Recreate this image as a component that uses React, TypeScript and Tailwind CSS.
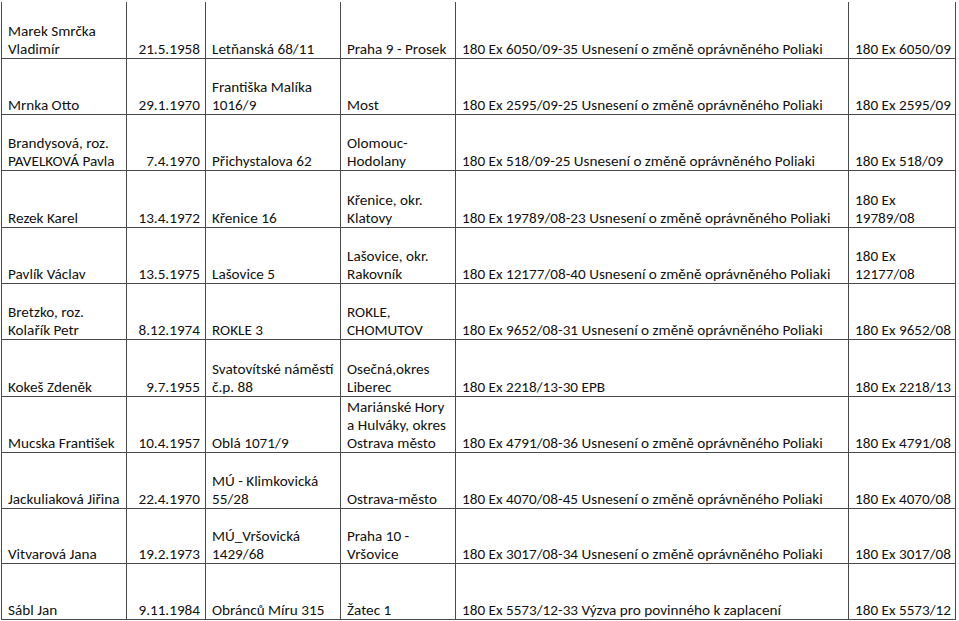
const ROWS: { h: string; cells: string[][] }[] = [
  {
    h: 'h-[57px]',
    cells: [
      ['Marek Smrčka', 'Vladimír'],
      ['21.5.1958'],
      ['Letňanská 68/11'],
      ['Praha 9 - Prosek'],
      ['180 Ex 6050/09-35 Usnesení o změně oprávněného Poliaki'],
      ['180 Ex 6050/09'],
    ],
  },
  {
    h: 'h-[56px]',
    cells: [
      ['Mrnka Otto'],
      ['29.1.1970'],
      ['Františka Malíka', '1016/9'],
      ['Most'],
      ['180 Ex 2595/09-25 Usnesení o změně oprávněného Poliaki'],
      ['180 Ex 2595/09'],
    ],
  },
  {
    h: 'h-[56px]',
    cells: [
      ['Brandysová, roz.', 'PAVELKOVÁ Pavla'],
      ['7.4.1970'],
      ['Přichystalova 62'],
      ['Olomouc-', 'Hodolany'],
      ['180 Ex 518/09-25 Usnesení o změně oprávněného Poliaki'],
      ['180 Ex 518/09'],
    ],
  },
  {
    h: 'h-[57px]',
    cells: [
      ['Rezek Karel'],
      ['13.4.1972'],
      ['Křenice 16'],
      ['Křenice, okr.', 'Klatovy'],
      ['180 Ex 19789/08-23 Usnesení o změně oprávněného Poliaki'],
      ['180 Ex', '19789/08'],
    ],
  },
  {
    h: 'h-[56px]',
    cells: [
      ['Pavlík Václav'],
      ['13.5.1975'],
      ['Lašovice 5'],
      ['Lašovice, okr.', 'Rakovník'],
      ['180 Ex 12177/08-40 Usnesení o změně oprávněného Poliaki'],
      ['180 Ex', '12177/08'],
    ],
  },
  {
    h: 'h-[56px]',
    cells: [
      ['Bretzko, roz.', 'Kolařík Petr'],
      ['8.12.1974'],
      ['ROKLE 3'],
      ['ROKLE,', 'CHOMUTOV'],
      ['180 Ex 9652/08-31 Usnesení o změně oprávněného Poliaki'],
      ['180 Ex 9652/08'],
    ],
  },
  {
    h: 'h-[57px]',
    cells: [
      ['Kokeš Zdeněk'],
      ['9.7.1955'],
      ['Svatovítské náměstí', 'č.p. 88'],
      ['Osečná,okres', 'Liberec'],
      ['180 Ex 2218/13-30 EPB'],
      ['180 Ex 2218/13'],
    ],
  },
  {
    h: 'h-[56px]',
    cells: [
      ['Mucska František'],
      ['10.4.1957'],
      ['Oblá 1071/9'],
      ['Mariánské Hory', 'a Hulváky, okres', 'Ostrava město'],
      ['180 Ex 4791/08-36 Usnesení o změně oprávněného Poliaki'],
      ['180 Ex 4791/08'],
    ],
  },
  {
    h: 'h-[56px]',
    cells: [
      ['Jackuliaková Jiřina'],
      ['22.4.1970'],
      ['MÚ - Klimkovická', '55/28'],
      ['Ostrava-město'],
      ['180 Ex 4070/08-45 Usnesení o změně oprávněného Poliaki'],
      ['180 Ex 4070/08'],
    ],
  },
  {
    h: 'h-[55px]',
    cells: [
      ['Vitvarová Jana'],
      ['19.2.1973'],
      ['MÚ_Vršovická', '1429/68'],
      ['Praha 10 -', 'Vršovice'],
      ['180 Ex 3017/08-34 Usnesení o změně oprávněného Poliaki'],
      ['180 Ex 3017/08'],
    ],
  },
  {
    h: 'h-[56px]',
    cells: [
      ['Sábl Jan'],
      ['9.11.1984'],
      ['Obránců Míru 315'],
      ['Žatec 1'],
      ['180 Ex 5573/12-33 Výzva pro povinného k zaplacení'],
      ['180 Ex 5573/12'],
    ],
  },
]

export default function App() {
  return (
    <div className="h-[621px] w-[959px] overflow-hidden bg-white pt-[2px] pl-[1px] font-['Carlito','Lato',sans-serif] text-[15.2px] leading-[18px] text-[#111]">
      <div className="grid w-max grid-cols-[125px_79px_135px_115px_393px_107px] border-l border-[#4a4a4a]">
        {ROWS.map((row, r) =>
          row.cells.map((lines, c) => (
            <div
              key={`${r}-${c}`}
              className={`${row.h} flex flex-col justify-end overflow-hidden whitespace-nowrap border-r border-b border-[#4a4a4a] ${
                c === 1 ? 'items-end pr-[5px]' : 'items-start pl-[6px]'
              }`}
            >
              {lines.map((l) => (
                <span key={l}>{l}</span>
              ))}
            </div>
          )),
        )}
      </div>
    </div>
  )
}
